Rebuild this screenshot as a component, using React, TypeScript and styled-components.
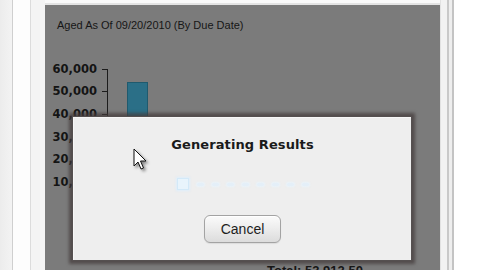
import React from "react";
import styled, { createGlobalStyle } from "styled-components";

const GlobalStyle = createGlobalStyle`
    html, body {
        margin: 0;
        padding: 0;
        background: #ffffff;
        overflow: hidden;
    }
    body {
        width: 480px;
        height: 270px;
        font-family: "Liberation Sans", Arial, sans-serif;
    }
`;

const Frame = styled.div`
    position: relative;
    display: flex;
    width: 480px;
    height: 270px;
    overflow: hidden;
    background: #ffffff;
`;

const LeftRail = styled.div`
    width: 45px;
    flex: none;
    background: linear-gradient(
        to right,
        #ececec 0, #f3f3f3 12px, #cfcfcf 12px, #cfcfcf 13px,
        #fdfdfd 13px, #fdfdfd 30px, #dcdcdc 30px, #dcdcdc 31px,
        #f4f4f4 31px, #f4f4f4 45px
    );
`;

const RightRail = styled.div`
    flex: 1;
    background: linear-gradient(
        to right,
        #e2e2e2 0, #e2e2e2 1px, #f2f2f2 1px, #f2f2f2 7px,
        #c9c9c9 7px, #c9c9c9 9px, #eeeeee 9px, #eeeeee 12px,
        #c4c4c4 12px, #c4c4c4 14px, #ffffff 14px
    );
`;

const Main = styled.div`
    width: 395px;
    flex: none;
    display: flex;
    flex-direction: column;
`;

const TopStrip = styled.div`
    height: 5px;
    flex: none;
    background: linear-gradient(to bottom, #fafafa 0, #fafafa 3px, #e4e4e4 3px);
`;

const Panel = styled.div`
    position: relative;
    flex: 1;
    background: #7b7b7b;
    padding: 14px 0 0 12px;
`;

const Title = styled.div`
    font-size: 11px;
    line-height: 13px;
    color: #161616;
`;

const Chart = styled.div`
    display: flex;
    margin-top: 25.6px;
`;

const Labels = styled.div`
    width: 40px;
    display: flex;
    flex-direction: column;
    align-items: flex-end;
`;

const AxisLabel = styled.div`
    height: 22.7px;
    line-height: 22.7px;
    font-family: "DejaVu Sans", Verdana, sans-serif;
    font-weight: bold;
    font-size: 11.5px;
    color: #141414;
    white-space: nowrap;
`;

const Ticks = styled.div`
    margin-left: 5px;
    width: 6px;
    display: flex;
    flex-direction: column;
`;

const Tick = styled.div<{ $first?: boolean; $last?: boolean }>`
    position: relative;
    height: 22.7px;
    &::before {
        content: "";
        position: absolute;
        left: 0;
        right: 0;
        top: 11px;
        height: 1px;
        background: #1c1c1c;
    }
    &::after {
        content: "";
        position: absolute;
        right: 0;
        width: 1px;
        top: ${(p) => (p.$first ? "11px" : "0")};
        bottom: ${(p) => (p.$last ? "11px" : "0")};
        background: #1c1c1c;
    }
`;

const Plot = styled.div`
    margin-top: 11.4px;
    height: 136px;
    display: flex;
    align-items: flex-end;
    padding-left: 19px;
`;

const Bar = styled.div`
    width: 19px;
    background: #2b6f87;
    border: 1px solid #1f5a6e;
    border-bottom: none;
`;

const Footer = styled.div`
    margin: 48px 0 0 210px;
    font-size: 13px;
    line-height: 14px;
    font-weight: bold;
    color: #161616;
    white-space: nowrap;
`;

const Dialog = styled.div`
    position: absolute;
    left: 28px;
    top: 112px;
    width: 338px;
    height: 143px;
    box-sizing: border-box;
    background: #eeeeee;
    border-top: 1px solid #f7f7f7;
    border-left: 1px solid #f7f7f7;
    box-shadow: 0 0 0 1px #555050, 0 0 3px 4px rgba(70, 62, 62, 0.75);
    display: flex;
    flex-direction: column;
    align-items: center;
    padding-top: 19px;
`;

const DialogTitle = styled.div`
    font-family: "DejaVu Sans", Verdana, sans-serif;
    font-weight: bold;
    font-size: 13px;
    line-height: 15px;
    color: #1a1a1a;
    letter-spacing: 0.1px;
`;

const Progress = styled.div`
    margin-top: 26px;
    height: 12px;
    display: flex;
    align-items: center;
    gap: 8px;
    padding-left: 1px;
`;

const ProgressBox = styled.div`
    width: 10px;
    height: 10px;
    border: 1px solid #d3e9f8;
    background: #e8f4fc;
    box-shadow: 0 0 2px 1px rgba(220, 238, 252, 0.9);
`;

const ProgressDot = styled.div`
    width: 7px;
    height: 3px;
    border-radius: 2px;
    background: #e4eff8;
    box-shadow: 0 0 2px 1px rgba(232, 244, 252, 0.9);
`;

const CancelButton = styled.button`
    margin-top: 25px;
    width: 77px;
    height: 28px;
    border: 1px solid #a3a3a3;
    border-radius: 6px;
    background: linear-gradient(to bottom, #fbfbfb 0%, #ececec 50%, #dcdcdc 100%);
    box-shadow: inset 0 1px 0 #ffffff, 0 1px 1px rgba(0, 0, 0, 0.08);
    font-family: "Liberation Sans", Arial, sans-serif;
    font-size: 14px;
    color: #1e1e1e;
    padding: 0;
    cursor: default;
`;

const Cursor = styled.svg`
    position: absolute;
    left: 133px;
    top: 148px;
    overflow: visible;
    filter: drop-shadow(2px 2px 1.5px rgba(0, 0, 0, 0.45));
`;

const axis = ["60,000", "50,000", "40,000", "30,000", "20,000", "10,000", "0"];
const value = 53900;
const max = 60000;

const App = () => (
    <>
        <GlobalStyle />
        <Frame>
            <LeftRail />
            <Main>
                <TopStrip />
                <Panel>
                    <Title>Aged As Of 09/20/2010 (By Due Date)</Title>
                    <Chart>
                        <Labels>
                            {axis.map((label) => (
                                <AxisLabel key={label}>{label}</AxisLabel>
                            ))}
                        </Labels>
                        <Ticks>
                            {axis.map((label, index) => (
                                <Tick key={label} $first={index === 0} $last={index === axis.length - 1} />
                            ))}
                        </Ticks>
                        <Plot>
                            <Bar style={{ height: `${(value / max) * 136}px` }} />
                        </Plot>
                    </Chart>
                    <Footer>Total: 53,912.50</Footer>
                    <Dialog>
                        <DialogTitle>Generating Results</DialogTitle>
                        <Progress>
                            <ProgressBox />
                            {Array.from({ length: 8 }).map((_, index) => (
                                <ProgressDot key={index} />
                            ))}
                        </Progress>
                        <CancelButton>Cancel</CancelButton>
                    </Dialog>
                </Panel>
            </Main>
            <RightRail />
            <Cursor width="14" height="22" viewBox="0 0 14 22">
                <path
                    d="M1 1 L1 18 L5 14 L8 21 L10.5 20 L7.5 13 L13 13 Z"
                    fill="#ffffff"
                    stroke="#111111"
                    strokeWidth="1"
                    strokeLinejoin="miter"
                />
            </Cursor>
        </Frame>
    </>
);

export default App;
